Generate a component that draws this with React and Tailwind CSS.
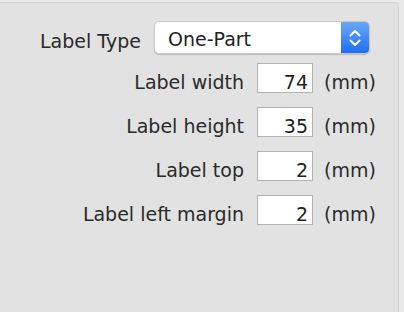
const FONT = { fontFamily: '"DejaVu Sans", "Liberation Sans", sans-serif' };

const rows = [
  { label: 'Label width', value: '74' },
  { label: 'Label height', value: '35' },
  { label: 'Label top', value: '2' },
  { label: 'Label left margin', value: '2' },
];

function Chevrons() {
  return (
    <svg width="14" height="20" viewBox="0 0 14 20" fill="none">
      <path d="M2.5 7.5 L7 3 L11.5 7.5" stroke="white" strokeWidth="2" strokeLinecap="round" strokeLinejoin="round" />
      <path d="M2.5 12.5 L7 17 L11.5 12.5" stroke="white" strokeWidth="2" strokeLinecap="round" strokeLinejoin="round" />
    </svg>
  );
}

export default function App() {
  return (
    <div className="w-[404px] h-[312px] bg-[#e9e9e9] pt-[2px] pr-[5px] overflow-hidden" style={FONT}>
      <div className="h-full bg-[#e2e2e2] border-t border-r border-[#d3d3d3] rounded-tr-[5px] pt-[18px] text-[#2a2a2a] text-[19px]">
        {/* label type popup */}
        <div className="flex items-center pl-[40px] h-[33px]">
          <span className="w-[102px] pt-[8px] whitespace-nowrap">Label Type</span>
          <div className="ml-[12px] w-[216px] h-[33px] flex rounded-[5px] bg-white border border-[#c9c9c9] shadow-[0_1px_1px_rgba(0,0,0,0.18)] overflow-hidden">
            <div className="flex-1 flex items-center pl-[13px] pt-[4px] text-[#222]">One-Part</div>
            <div className="w-[28px] flex items-center justify-center bg-gradient-to-b from-[#6ba7f9] to-[#1b6cf6]">
              <Chevrons />
            </div>
          </div>
        </div>

        <div className="flex flex-col gap-[14px] mt-[9px]">
          {rows.map(r => (
            <div key={r.label} className="flex items-center h-[30px]">
              <span className="w-[244px] text-right whitespace-nowrap pt-[8px]">{r.label}</span>
              <div className="ml-[13px] w-[56px] h-[30px] bg-white border border-[#b3b3b3] flex items-center justify-end pr-[4px] pt-[8px] text-[#222]">
                {r.value}
              </div>
              <span className="ml-[11px] pt-[8px]">(mm)</span>
            </div>
          ))}
        </div>
      </div>
    </div>
  );
}
